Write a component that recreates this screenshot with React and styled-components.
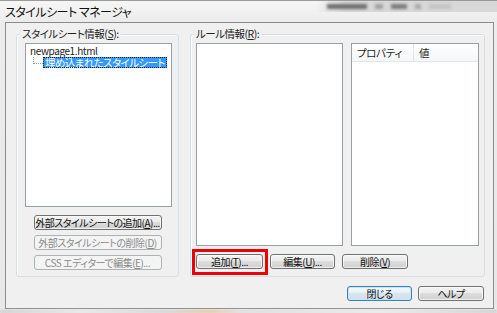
import styled, { createGlobalStyle, css } from "styled-components";

const GlobalStyle = createGlobalStyle`
  html, body {
    margin: 0;
    padding: 0;
  }
  body {
    width: 497px;
    height: 313px;
    overflow: hidden;
    background: #e4e4e4;
    font-family: "Noto Sans CJK JP", "Liberation Sans", sans-serif;
    font-feature-settings: "palt";
    color: #000;
    white-space: nowrap;
  }
`;

const Frame = styled.div`
  width: 497px;
  height: 313px;
  box-sizing: border-box;
  display: flex;
  flex-direction: column;
  border-top: 1px solid #9a9a9a;
  background: linear-gradient(#f6f6f6, #ececec 21px, #e8e8e8);
`;

const TitleBar = styled.div`
  height: 21px;
  display: flex;
  align-items: center;
  padding-left: 5px;
`;

const Title = styled.span`
  font-size: 12px;
  line-height: 14px;
  letter-spacing: -0.5px;
  color: #111;
`;

const Glass = styled.div`
  margin-left: auto;
  align-self: flex-start;
  width: 170px;
  height: 11px;
  display: flex;
  align-items: center;
  gap: 8px;
  padding-left: 12px;
  background: linear-gradient(to right, rgba(200, 200, 200, 0), #d8d8d8 30px);
`;

const Smudge = styled.span`
  width: ${(p) => p.$w}px;
  height: 5px;
  background: ${(p) => p.$c || "#8a8a8a"};
  filter: blur(1.5px);
`;

const Client = styled.div`
  margin-left: 5px;
  width: 489px;
  height: 287px;
  box-sizing: border-box;
  border: 1px solid #8c8c8c;
  background: #f0f0f0;
  display: flex;
  flex-direction: column;
  padding: 11px 8px 7px 10px;
`;

const Groups = styled.div`
  display: flex;
  gap: 11px;
  height: 243px;
`;

const Group = styled.div`
  width: ${(p) => p.$w}px;
  box-sizing: border-box;
  border: 1px solid #d5dfe5;
  border-radius: 3px;
  box-shadow: inset 1px 1px 0 #fff;
  display: flex;
  flex-direction: column;
`;

const Legend = styled.span`
  align-self: flex-start;
  margin: -7px 0 0 3px;
  padding: 0 2px;
  height: 12px;
  font-size: 10.5px;
  line-height: 12px;
  letter-spacing: -0.5px;
  color: #222;
  background: #f0f0f0;
`;

const ListBox = styled.div`
  width: ${(p) => p.$w}px;
  height: ${(p) => p.$h}px;
  box-sizing: border-box;
  border: 1px solid #9a9ea6;
  background: #fff;
  font-size: 10.5px;
  line-height: 12px;
  letter-spacing: -0.4px;
  color: #222;
`;

const LeftList = styled(ListBox)`
  margin: 3px 0 0 8px;
  padding-top: 1px;
`;

const TreeRow = styled.div`
  display: flex;
  align-items: flex-start;
  height: ${(p) => p.$h || 12}px;
  padding-left: 4px;
  font-size: ${(p) => p.$size || 10.5}px;
`;

const Connector = styled.span`
  margin-left: 3px;
  width: 9px;
  height: 6px;
  border-left: 1px dotted #9a9a9a;
  border-bottom: 1px dotted #9a9a9a;
`;

const Selected = styled.span`
  padding: 0 2px 0 2px;
  height: 11px;
  line-height: 11px;
  background: #3399ff;
  color: #fff;
  outline: 1px dotted #222;
  outline-offset: -1px;
  letter-spacing: -0.6px;
`;

const ButtonStack = styled.div`
  margin-top: 8px;
  display: flex;
  flex-direction: column;
  align-items: center;
  gap: 5px;
`;

const Button = styled.button`
  position: relative;
  width: ${(p) => p.$w}px;
  height: 15px;
  box-sizing: border-box;
  padding: 0;
  font-family: inherit;
  font-feature-settings: "palt";
  font-size: 10px;
  line-height: 12px;
  letter-spacing: -0.5px;
  white-space: nowrap;
  border-radius: 3px;
  border: 1px solid #707070;
  color: #111;
  background: linear-gradient(#f3f3f3, #ebebeb 50%, #dddddd 50%, #cfcfcf);
  box-shadow: inset 0 0 0 1px rgba(255, 255, 255, 0.7);

  ${(p) =>
    p.disabled &&
    css`
      border-color: #adb2b5;
      background: #f4f4f4;
      color: #8a8a8a;
      box-shadow: none;
    `}

  ${(p) =>
    p.$default &&
    css`
      border-color: #3c7fb1;
      background: linear-gradient(#f4f9fc, #e6eff5 50%, #d9e5ee 50%, #d3e0ea);
      box-shadow: inset 0 0 0 1px #c5e6f8;
    `}

  ${(p) =>
    p.$marked &&
    css`
      &::after {
        content: "";
        position: absolute;
        top: -6px;
        left: -5px;
        right: -6px;
        bottom: -7px;
        border: 3px solid #ee0000;
      }
    `}
`;

const ListRow = styled.div`
  margin: 3px 0 0 5px;
  display: flex;
  gap: 8px;
`;

const Header = styled.div`
  display: flex;
  height: 17px;
  border-bottom: 1px solid #e3e6ea;
  background: linear-gradient(#ffffff, #f4f6f8);
`;

const Column = styled.span`
  width: ${(p) => p.$w}px;
  box-sizing: border-box;
  padding-left: 5px;
  line-height: 17px;
  border-right: ${(p) => (p.$divider ? "1px solid #e2e4e8" : "none")};
`;

const ButtonRow = styled.div`
  margin: 8px 0 0 5px;
  display: flex;
  gap: ${(p) => p.$gap || 7}px;
`;

const Footer = styled(ButtonRow)`
  margin: 9px 1px 0 0;
  justify-content: flex-end;
`;

const Backdrop = styled.div`
  flex: 1;
  margin-top: 1px;
  background: linear-gradient(
    to right,
    #cfcfcf,
    #e9e9e9 80px,
    #d6d6d6 160px,
    #e8c9a0 210px,
    #dedede 240px,
    #ececec 380px,
    #d0d0d0
  );
  filter: blur(1px);
`;

export default function App() {
  return (
    <>
      <GlobalStyle />
      <Frame>
        <TitleBar>
          <Title>スタイルシート マネージャ</Title>
          <Glass>
            <Smudge $w={40} $c="#6d6d6d" />
            <Smudge $w={8} $c="#a0a0a0" />
            <Smudge $w={16} $c="#7a7a7a" />
            <Smudge $w={6} $c="#a8a8a8" />
            <Smudge $w={22} $c="#c4c4c4" />
          </Glass>
        </TitleBar>
        <Client>
          <Groups>
            <Group $w={163}>
              <Legend>
                スタイルシート情報(<u>S</u>):
              </Legend>
              <LeftList $w={147} $h={164}>
                <TreeRow $size={10}>newpage1.html</TreeRow>
                <TreeRow $h={11}>
                  <Connector />
                  <Selected>埋め込まれたスタイルシート</Selected>
                </TreeRow>
              </LeftList>
              <ButtonStack>
                <Button $w={128}>
                  外部スタイルシートの追加(<u>A</u>)...
                </Button>
                <Button $w={128} disabled>
                  外部スタイルシートの削除(<u>D</u>)
                </Button>
                <Button $w={128} disabled>
                  CSS エディターで編集(<u>E</u>)...
                </Button>
              </ButtonStack>
            </Group>
            <Group $w={295}>
              <Legend>
                ルール情報(<u>R</u>):
              </Legend>
              <ListRow>
                <ListBox $w={147} $h={203} />
                <ListBox $w={128} $h={203}>
                  <Header>
                    <Column $w={62} $divider>
                      プロパティ
                    </Column>
                    <Column $w={50}>値</Column>
                  </Header>
                </ListBox>
              </ListRow>
              <ButtonRow>
                <Button $w={67} $marked>
                  追加(<u>T</u>)...
                </Button>
                <Button $w={65}>
                  編集(<u>U</u>)...
                </Button>
                <Button $w={66}>
                  削除(<u>V</u>)
                </Button>
              </ButtonRow>
            </Group>
          </Groups>
          <Footer $gap={6}>
            <Button $w={65} $default>
              閉じる
            </Button>
            <Button $w={66}>ヘルプ</Button>
          </Footer>
        </Client>
        <Backdrop />
      </Frame>
    </>
  );
}
